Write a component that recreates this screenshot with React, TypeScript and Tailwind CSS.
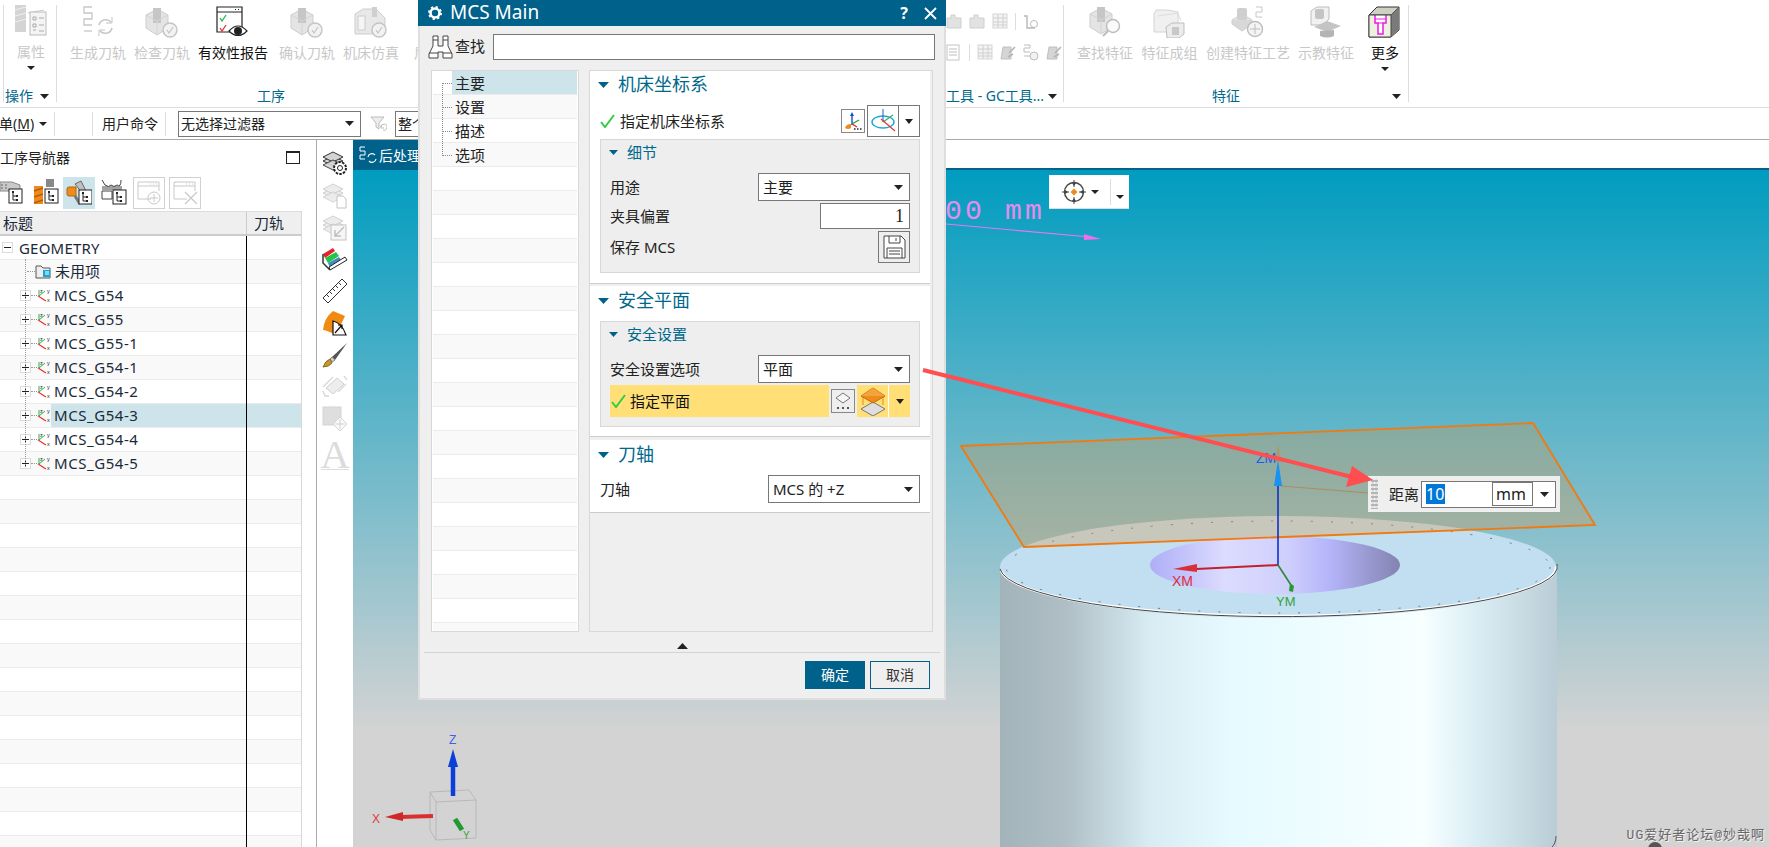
import React from "react";

const Tri = ({ w = 10, h = 6, up = false, color = "#222" }: { w?: number; h?: number; up?: boolean; color?: string }) => (
  <svg width={w} height={h} viewBox="0 0 10 6" preserveAspectRatio="none" className="shrink-0">
    <polygon points={up ? "5,0 10,6 0,6" : "0,0 10,0 5,6"} fill={color} />
  </svg>
);

const Snake = ({ x = 0, y = 0, c = "#c8c8c8" }: { x?: number; y?: number; c?: string }) => (
  <path d={`M${x + 8} ${y}H${x}V${y + 6}H${x + 8}V${y + 12}H${x}V${y + 18}H${x + 8}`} fill="none" stroke={c} strokeWidth="1.3" />
);

const TickCircle = ({ cx, cy, r = 7, c = "#c4c4c4" }: { cx: number; cy: number; r?: number; c?: string }) => (
  <g>
    <circle cx={cx} cy={cy} r={r} fill="#f2f2f2" stroke={c} strokeWidth="1.4" />
    <path d={`M${cx - 3} ${cy}l2 3l4 -6`} fill="none" stroke={c} strokeWidth="1.2" />
  </g>
);

const GrayBlock = ({ x = 0, y = 0 }: { x?: number; y?: number }) => (
  <g transform={`translate(${x} ${y})`}>
    <path d="M0 7L11 1L22 7V20L11 27L0 20Z" fill="#e4e4e4" stroke="#cdcdcd" />
    <rect x="7" y="0" width="8" height="15" fill="#c6c6c6" />
    <path d="M0 7L11 13L22 7M11 13V27" fill="none" stroke="#d4d4d4" />
  </g>
);

const I32 = ({ children }: { children: React.ReactNode }) => (
  <svg width="34" height="32" viewBox="0 0 34 32" className="shrink-0">
    {children}
  </svg>
);

const PropIcon = () => (
  <I32>
    <rect x="1" y="0" width="11" height="27" fill="#d4d4d4" />
    <path d="M1 5l11 -3M1 11l11 -3M1 17l11 -3" stroke="#eee" />
    <path d="M14 8l16 -3" stroke="#ccc" />
    <rect x="16" y="7" width="16" height="23" fill="#f4f4f4" stroke="#bbb" />
    <path d="M19 12h3v3h-3zM19 19h3v3h-3zM19 25h3M25 13h5M25 20h5M25 26h5" fill="none" stroke="#aaa" />
  </I32>
);
const GenIcon = () => (
  <I32>
    <Snake x={3} y={1} />
    <path d="M3 25h8" stroke="#c8c8c8" strokeWidth="1.3" />
    <path d="M18 19a7 7 0 0 1 12 -3M31 22a7 7 0 0 1 -12 3" fill="none" stroke="#c4c4c4" strokeWidth="1.5" />
    <path d="M31 11v6h-6M18 30v-6h6" fill="none" stroke="#c4c4c4" />
  </I32>
);
const CheckPathIcon = () => (
  <I32>
    <GrayBlock x={1} y={2} />
    <TickCircle cx={25} cy={24} />
  </I32>
);
const ReportIcon = () => (
  <I32>
    <path d="M26 26V1H1V26H14" fill="#fff" stroke="#222" strokeWidth="1.2" />
    <path d="M1 6H26" stroke="#222" />
    <path d="M19 3.5h1M22 3.5h1" stroke="#222" />
    <path d="M4 12l2 3l4 -6" fill="none" stroke="#22bb44" strokeWidth="1.3" />
    <path d="M4 22l2 3l4 -6" fill="none" stroke="#e8313a" strokeWidth="1.3" />
    <path d="M13 25q9 -10 18 0q-9 9 -18 0z" fill="#fff" stroke="#222" strokeWidth="1.2" />
    <circle cx="22" cy="25" r="4" fill="#222" />
  </I32>
);
const MachineIcon = () => (
  <I32>
    <path d="M1 8L9 3H22L31 12V28H1Z" fill="#e8e8e8" stroke="#cdcdcd" />
    <rect x="4" y="10" width="7" height="14" fill="#f5f5f5" stroke="#ccc" />
    <rect x="18" y="1" width="5" height="10" fill="#cfcfcf" />
    <TickCircle cx={25} cy={24} />
  </I32>
);
const FindIcon = () => (
  <I32>
    <GrayBlock x={2} y={1} />
    <circle cx="25" cy="20" r="6.5" fill="#fafafa" stroke="#bcbcbc" strokeWidth="1.4" />
    <path d="M20 25l-5 5" stroke="#bcbcbc" strokeWidth="2" />
  </I32>
);
const GroupIcon = () => (
  <I32>
    <path d="M1 8l2 -4h12l10 2v20H1z" fill="#f0f0f0" stroke="#d4d4d4" />
    <path d="M5 10l20 -3l3 8" fill="none" stroke="#dcdcdc" />
    <path d="M13 21l6 -4h12v11l-5 4H14z" fill="#ececec" stroke="#bdbdbd" />
    <rect x="19" y="21" width="7" height="8" fill="#c8c8c8" />
  </I32>
);
const CreateIcon = () => (
  <I32>
    <path d="M1 14L11 8L21 14L11 21Z" fill="#e4e4e4" stroke="#cfcfcf" />
    <path d="M1 14v4l10 7l10 -7v-4" fill="#d8d8d8" stroke="#cfcfcf" />
    <rect x="6" y="2" width="10" height="12" rx="2" fill="#cfcfcf" />
    <path d="M25 1h6v5h-6v5h6" fill="none" stroke="#c8c8c8" />
    <circle cx="24" cy="23" r="7.5" fill="#f4f4f4" stroke="#bdbdbd" strokeWidth="1.4" />
    <path d="M24 18v10M19 23h10" stroke="#bdbdbd" />
  </I32>
);
const TeachIcon = () => (
  <I32>
    <path d="M2 5l6 -4h12v12l-6 6H2z" fill="#f1f1f1" stroke="#bdbdbd" />
    <rect x="6" y="3" width="9" height="10" rx="2" fill="#c4c4c4" />
    <path d="M5 21l13 -6l14 5l-14 6z" fill="#c4c4c4" />
    <path d="M11 25v5q7 3 14 0v-6" fill="#b4b4b4" />
  </I32>
);
const MoreIcon = () => (
  <I32>
    <path d="M1 9L9 1H31V24L23 31H1Z" fill="#cfd0c4" stroke="#333" />
    <path d="M1 9H23V31M23 9L31 1" fill="none" stroke="#333" />
    <path d="M23 9L31 1V24L23 31Z" fill="#7a7a7a" />
    <rect x="1" y="9" width="22" height="22" fill="#eef0e0" />
    <path d="M7 9V17H10V28H15V17H18V9" fill="#fff" stroke="#f018e8" strokeWidth="1.5" />
    <path d="M7 13H18M10 17H15" stroke="#f018e8" strokeWidth="1.2" />
    <path d="M1 9H23V31H1Z" fill="none" stroke="#444" />
  </I32>
);

const Small = ({ kind }: { kind: number }) => (
  <svg width="16" height="17" viewBox="0 0 16 17" className="shrink-0">
    {kind === 0 && <path d="M1 5h4v-3h4v3h6v10h-14z" fill="#e2e2e2" stroke="#cfcfcf" />}
    {kind === 1 && (
      <g>
        <rect x="1" y="1" width="14" height="14" fill="#f3f3f3" stroke="#d6d6d6" />
        <path d="M1 5h14M1 9h14M1 12h14M6 1v14M11 1v14" stroke="#d0d0d0" />
      </g>
    )}
    {kind === 2 && (
      <g>
        <path d="M1 3h3v12h8" fill="none" stroke="#b8b8b8" strokeWidth="1.4" />
        <circle cx="11" cy="11" r="3.5" fill="none" stroke="#bcbcbc" />
      </g>
    )}
    {kind === 3 && (
      <g>
        <rect x="1" y="1" width="12" height="15" fill="#fff" stroke="#c4c4c4" />
        <path d="M3 5h8M3 8h8M3 11h8" stroke="#bdbdbd" />
      </g>
    )}
    {kind === 4 && (
      <g>
        <path d="M1 15l2 -12h8v12z" fill="#d5d5d5" stroke="#c0c0c0" />
        <path d="M9 9l6 -6M8 13l5 -3" stroke="#b5b5b5" strokeWidth="1.6" />
      </g>
    )}
    {kind === 5 && (
      <g>
        <path d="M1 1h6v3h-6v4h6M1 12h6" fill="none" stroke="#bdbdbd" />
        <circle cx="11" cy="12" r="4" fill="#f1f1f1" stroke="#bdbdbd" />
      </g>
    )}
  </svg>
);

const RibbonBtn = ({
  w,
  label,
  dark,
  caret,
  children,
}: {
  w: number;
  label: string;
  dark?: boolean;
  caret?: boolean;
  children: React.ReactNode;
}) => (
  <div className={`flex flex-col items-center shrink-0 ${w === 64 ? "w-[64px]" : w === 65 ? "w-[65px]" : w === 78 ? "w-[78px]" : w === 92 ? "w-[92px]" : w === 46 ? "w-[46px]" : "w-[54px]"}`}>
    <div className="h-[32px] flex justify-center">{children}</div>
    <div className={`mt-[5px] h-[20px] leading-[20px] text-[14px] whitespace-nowrap ${dark ? "text-[#111]" : "text-[#c8c8c8]"}`}>{label}</div>
    {caret && (
      <div className="mt-[4px]">
        <Tri w={8} h={4} />
      </div>
    )}
  </div>
);

const GroupLabel = ({ text, className, tri }: { text: string; className: string; tri?: string }) => (
  <div className={`flex items-center h-[20px] -mb-[4px] text-[14px] leading-[20px] text-[#00688c] whitespace-nowrap shrink-0 ${className}`}>
    <span>{text}</span>
    {tri && (
      <div className={tri}>
        <Tri w={9} h={5} />
      </div>
    )}
  </div>
);

const Ribbon = () => (
  <div className="flex h-[107px] pl-[3px] pt-[5px] shrink-0 overflow-hidden">
    <div className="w-[54px] h-[97px] border-x border-[#dddddd] flex flex-col justify-between shrink-0">
      <RibbonBtn w={54} label="属性" caret>
        <PropIcon />
      </RibbonBtn>
      <GroupLabel text="操作" className="pl-[1px]" tri="ml-[7px]" />
    </div>
    <div className="w-[428px] h-[97px] flex flex-col justify-between shrink-0">
      <div className="flex pl-[9px] pt-[1px]">
        <RibbonBtn w={64} label="生成刀轨">
          <GenIcon />
        </RibbonBtn>
        <RibbonBtn w={64} label="检查刀轨">
          <CheckPathIcon />
        </RibbonBtn>
        <RibbonBtn w={78} label="有效性报告" dark>
          <ReportIcon />
        </RibbonBtn>
        <div className="w-[3px]" />
        <RibbonBtn w={64} label="确认刀轨">
          <CheckPathIcon />
        </RibbonBtn>
        <RibbonBtn w={64} label="机床仿真">
          <MachineIcon />
        </RibbonBtn>
        <RibbonBtn w={64} label="后处理">
          <GenIcon />
        </RibbonBtn>
      </div>
      <GroupLabel text="工序" className="pl-[200px]" />
    </div>
    <div className="w-[579px] h-[97px] border-r border-[#dddddd] flex flex-col shrink-0">
      <div className="flex items-center gap-[7px] pl-[461px] mt-[8px] h-[17px]">
        <Small kind={0} />
        <Small kind={0} />
        <Small kind={1} />
        <div className="w-[1px] h-[17px] bg-[#dddddd]" />
        <Small kind={2} />
      </div>
      <div className="flex items-center gap-[7px] pl-[461px] mt-[14px] h-[17px]">
        <Small kind={3} />
        <div className="w-[1px] h-[17px] bg-[#dddddd]" />
        <Small kind={1} />
        <Small kind={4} />
        <Small kind={5} />
        <Small kind={4} />
      </div>
      <GroupLabel text="工具 - GC工具..." className="pl-[461px] mt-auto" tri="ml-[4px]" />
    </div>
    <div className="w-[345px] h-[97px] border-r border-[#dddddd] flex flex-col justify-between shrink-0">
      <div className="flex pl-[9px] pt-[1px]">
        <RibbonBtn w={64} label="查找特征">
          <FindIcon />
        </RibbonBtn>
        <RibbonBtn w={65} label="特征成组">
          <GroupIcon />
        </RibbonBtn>
        <RibbonBtn w={92} label="创建特征工艺">
          <CreateIcon />
        </RibbonBtn>
        <RibbonBtn w={64} label="示教特征">
          <TeachIcon />
        </RibbonBtn>
        <div className="w-[5px]" />
        <RibbonBtn w={46} label="更多" dark caret>
          <MoreIcon />
        </RibbonBtn>
      </div>
      <GroupLabel text="特征" className="pl-[148px]" tri="ml-[152px]" />
    </div>
  </div>
);

const CommandBar = () => (
  <div className="flex items-center h-[33px] border-y border-t-[#dddddd] border-b-[#aaaaaa] shrink-0 text-[14px] text-[#222] overflow-hidden">
    <span className="w-[40px] -ml-[1px] whitespace-nowrap">
      单(<span className="underline">M</span>)
    </span>
    <Tri w={8} h={4} />
    <div className="w-[1px] h-[24px] bg-[#dddddd] ml-[7px]" />
    <div className="w-[1px] h-[24px] bg-[#dddddd] ml-[37px]" />
    <span className="ml-[9px] whitespace-nowrap">用户命令</span>
    <div className="w-[1px] h-[24px] bg-[#dddddd] ml-[7px]" />
    <div className="ml-[12px] w-[183px] h-[26px] border border-[#777] flex items-center justify-between pl-[2px] pr-[6px] shrink-0">
      <span>无选择过滤器</span>
      <Tri w={9} h={5} />
    </div>
    <svg width="17" height="16" viewBox="0 0 17 16" className="ml-[9px] shrink-0">
      <path d="M1 1h13l-5 6v6l-3 -2v-4z" fill="#eee" stroke="#bcbcbc" />
      <path d="M11 11a3 3 0 1 1 2 3M11 9v3h3" fill="none" stroke="#bcbcbc" />
    </svg>
    <div className="ml-[8px] w-[60px] h-[26px] border border-[#777] pl-[2px] leading-[24px] shrink-0">整个</div>
  </div>
);

const TreeBadge = ({ x, y }: { x: number; y: number }) => (
  <g transform={`translate(${x} ${y})`}>
    <rect x="0" y="0" width="13" height="14" fill="#fff" stroke="#222" />
    <path d="M4 3v8M4 7h3M4 11h3" stroke="#222" fill="none" />
    <rect x="3" y="2" width="2" height="2" fill="#222" />
    <rect x="7" y="6" width="2" height="2" fill="#222" />
    <rect x="7" y="10" width="2" height="2" fill="#222" />
  </g>
);

const NavBlockIcon = () => (
  <svg width="24" height="26" viewBox="0 0 24 26" className="shrink-0">
    <path d="M0 3h12l8 3v6H0z" fill="#c9c9c9" stroke="#888" />
    <path d="M1 6h2M5 6h2M1 9h2M5 9h2" stroke="#666" />
    <TreeBadge x={9} y={10} />
  </svg>
);
const NavToolIcon = () => (
  <svg width="26" height="26" viewBox="0 0 26 26" className="shrink-0">
    <rect x="13" y="0" width="8" height="8" fill="#888" />
    <rect x="1" y="7" width="9" height="18" fill="#ef8a1d" />
    <path d="M1 12l9 -3M1 18l9 -3M1 24l9 -3" stroke="#b55e0a" strokeWidth="1.5" />
    <TreeBadge x={12} y={10} />
  </svg>
);
const NavMachIcon = () => (
  <svg width="26" height="26" viewBox="0 0 26 26" className="shrink-0">
    <path d="M9 4l6 -3l5 10l-3 3z" fill="#bfbfbf" stroke="#666" />
    <path d="M1 9q0 -2 2 -2h7v9H3q-2 0 -2 -2z" fill="#ee8a1e" stroke="#b96400" />
    <path d="M9 16l5 8" stroke="#777" strokeWidth="3" />
    <TreeBadge x={13} y={10} />
  </svg>
);
const NavCrownIcon = () => (
  <svg width="26" height="26" viewBox="0 0 26 26" className="shrink-0">
    <path d="M1 1l3 5q4 3 6 0q3 3 6 0q4 3 4 -5" fill="none" stroke="#444" />
    <path d="M1 8h20M1 10h20" stroke="#444" />
    <path d="M1 12h10v8H1z" fill="#fff" stroke="#444" />
    <TreeBadge x={12} y={11} />
  </svg>
);
const NavDisabled = ({ plus }: { plus: boolean }) => (
  <svg width="32" height="32" viewBox="0 0 32 32" className="shrink-0">
    <rect x="0.5" y="0.5" width="31" height="31" fill="#fff" stroke="#d0d0d0" />
    <path d="M18 22H5V5H26V14M5 9H26" fill="none" stroke="#c8c8c8" />
    <path d="M17 7h1M20 7h1M23 7h1" stroke="#c8c8c8" />
    {plus ? (
      <g>
        <circle cx="21" cy="21" r="6" fill="none" stroke="#c8c8c8" />
        <path d="M21 17v8M17 21h8" stroke="#c8c8c8" />
      </g>
    ) : (
      <path d="M16 15l12 12M28 15l-12 12" stroke="#c8c8c8" strokeWidth="1.2" />
    )}
  </svg>
);

const McsIcon = () => (
  <svg width="14" height="15" viewBox="0 0 14 15" className="shrink-0">
    <path d="M2 2V8" stroke="#2bb050" />
    <path d="M2 8L8 3" stroke="#2bb050" />
    <path d="M1 8L9 13" stroke="#e8313a" strokeWidth="1.2" />
    <text x="3" y="4.5" fontSize="5.5" fill="#222" fontFamily="Liberation Sans">z</text>
    <text x="10" y="5" fontSize="5.5" fill="#222" fontFamily="Liberation Sans">y</text>
    <text x="10" y="14" fontSize="5.5" fill="#222" fontFamily="Liberation Sans">x</text>
  </svg>
);
const FolderIcon = () => (
  <svg width="16" height="14" viewBox="0 0 16 14" className="shrink-0">
    <path d="M1 1h5l2 2h7v10H1z" fill="#eee" stroke="#555" />
    <rect x="8" y="5" width="7" height="7" fill="#15a8d8" />
    <path d="M10 7h4M10 9h4" stroke="#fff" />
  </svg>
);

const mcsNames = ["MCS_G54", "MCS_G55", "MCS_G55-1", "MCS_G54-1", "MCS_G54-2", "MCS_G54-3", "MCS_G54-4", "MCS_G54-5"];

const NavRow = ({ index, selected, children }: { index: number; selected?: boolean; children?: React.ReactNode }) => (
  <div className={`flex h-[24px] border-b border-[#ebebeb] shrink-0 ${index % 2 ? "bg-[#f9f9f9]" : "bg-white"}`}>
    <div className="w-[246px] h-full flex items-center shrink-0">{children}</div>
    <div className={`flex-1 ${selected ? "bg-[#cce4ea]" : ""}`} />
  </div>
);

const Navigator = () => (
  <div className="w-[317px] border-r border-[#aaaaaa] flex flex-col shrink-0 overflow-hidden">
    <div className="flex items-center justify-between h-[35px] pr-[16px] shrink-0">
      <span className="text-[14px] text-[#222] -mt-[1px]">工序导航器</span>
      <div className="w-[14px] h-[13px] border border-[#222] border-t-2" />
    </div>
    <div className="flex items-center h-[36px] shrink-0">
      <div className="w-[33px] flex -mt-[3px]">
        <NavBlockIcon />
      </div>
      <div className="w-[30px] flex -mt-[3px]">
        <NavToolIcon />
      </div>
      <div className="w-[32px] h-[32px] bg-[#cce4ea] flex items-center justify-center">
        <NavMachIcon />
      </div>
      <div className="w-[38px] pl-[6px] flex -mt-[3px]">
        <NavCrownIcon />
      </div>
      <div className="mr-[4px]">
        <NavDisabled plus />
      </div>
      <NavDisabled plus={false} />
    </div>
    <div className="w-[302px] border-r border-[#d8d8d8] flex-1 flex flex-col overflow-hidden relative text-[15px] text-[#1b2a38]">
      <div className="flex h-[25px] bg-[#efefef] border-t border-[#dedede] border-b-2 border-b-[#cccccc] shrink-0">
        <div className="w-[246px] pl-[3px] leading-[22px]">标题</div>
        <div className="flex-1 pl-[7px] border-l border-[#cccccc] leading-[22px]">刀轨</div>
      </div>
      <NavRow index={0}>
        <div className="ml-[2px] w-[11px] h-[11px] border border-[#dddddd] flex items-center justify-center">
          <div className="w-[7px] h-[1px] bg-[#222]" />
        </div>
        <span className="ml-[6px] tracking-[0.2px] mt-[1px]">GEOMETRY</span>
      </NavRow>
      <NavRow index={1}>
        <div className="ml-[27px] w-[8px] border-t border-dotted border-[#999]" />
        <FolderIcon />
        <span className="ml-[4px]">未用项</span>
      </NavRow>
      {mcsNames.map((name, i) => (
        <NavRow key={name} index={i + 2} selected={name === "MCS_G54-3"}>
          <div className="ml-[20px] w-[11px] h-[11px] border border-[#dddddd] bg-white relative flex items-center justify-center shrink-0">
            <div className="w-[7px] h-[1px] bg-[#222]" />
            <div className="absolute w-[1px] h-[7px] bg-[#222]" />
          </div>
          <div className="w-[6px] border-t border-dotted border-[#999]" />
          <McsIcon />
          <div className={`flex-1 h-full flex items-center pl-[3px] tracking-[0.55px] ${name === "MCS_G54-3" ? "bg-[#cce4ea]" : ""}`}>{name}</div>
        </NavRow>
      ))}
      {Array.from({ length: 16 }).map((_, i) => (
        <NavRow key={i} index={i + 10} />
      ))}
      {/* dotted spine of the tree and the column rule */}
      <div className="absolute left-[25px] top-[48px] h-[208px] border-l border-dotted border-[#999]" />
      <div className="absolute left-[246px] top-[25px] bottom-0 w-[1px] bg-black" />
    </div>
  </div>
);

const T26 = ({ children }: { children: React.ReactNode }) => (
  <div className="h-[32px] flex justify-center shrink-0">
    <svg width="26" height="28" viewBox="0 0 26 28">
      {children}
    </svg>
  </div>
);

const Stack = ({ c, fill }: { c: string; fill: string }) => (
  <g fill={fill} stroke={c}>
    <path d="M1 11L11 6L21 11L11 16Z" />
    <path d="M1 7L11 2L21 7L11 12Z" />
    <path d="M1 15L11 10L21 15L11 20Z" opacity="0.9" />
  </g>
);

const SideBar = () => (
  <div className="w-[36px] flex flex-col pt-[10px] shrink-0">
    <T26>
      <Stack c="#333" fill="#d4d4d4" />
      <circle cx="18" cy="18" r="6" fill="#fff" stroke="#222" strokeWidth="2" strokeDasharray="2.5 1.2" />
      <circle cx="18" cy="18" r="2.5" fill="#fff" stroke="#222" />
    </T26>
    <T26>
      <Stack c="#cfcfcf" fill="#ececec" />
      <path d="M15 14h6l3 3v9h-9z" fill="#fff" stroke="#c4c4c4" />
    </T26>
    <T26>
      <Stack c="#cfcfcf" fill="#ececec" />
      <rect x="9" y="11" width="15" height="15" fill="#f6f6f6" stroke="#c4c4c4" />
      <path d="M22 13L13 22M13 16v6h6" fill="none" stroke="#bdbdbd" strokeWidth="1.4" />
    </T26>
    <T26>
      <path d="M1 8L11 2L13 5L3 12Z" fill="#e8212c" />
      <path d="M3 12L14 6L17 10L6 17Z" fill="#26c24a" />
      <path d="M6 17L17 11L20 15L8 22Z" fill="#3f8fc0" />
      <path d="M1 8V17L8 24" fill="none" stroke="#333" strokeWidth="1.5" />
      <path d="M8 24L25 14L23 11L7 21Z" fill="#fff" stroke="#222" />
    </T26>
    <T26>
      <path d="M1 20L20 1L25 6L6 25Z" fill="#fff" stroke="#333" />
      <path d="M5 17l2 2M8 14l2 2M11 11l2 2M14 8l2 2M17 5l2 2" stroke="#333" />
    </T26>
    <T26>
      <path d="M11 1L23 6L14 25Q4 20 1 20Q2 8 11 1Z" fill="#f08a12" />
      <path d="M11 11Q20 13 24 25H11Z" fill="#fff" stroke="#111" strokeWidth="1.2" />
      <path d="M13 23L20 15M16 15h4v4" fill="none" stroke="#111" strokeWidth="1.2" />
    </T26>
    <T26>
      <path d="M10 15L25 1L13 18Z" fill="#555" />
      <path d="M10 15l3 3l-3 2l-2 -3z" fill="#ccc" stroke="#888" />
      <path d="M8 17q-5 2 -7 8q6 0 9 -4z" fill="#c49a2c" stroke="#8a6a1a" />
    </T26>
    <T26>
      <path d="M4 14L15 4L22 10L11 20Z" fill="#ededed" stroke="#d0d0d0" />
      <path d="M1 17l2 5h4M1 13l10 -10M22 2l3 4M24 10l-8 8" fill="none" stroke="#d8d8d8" strokeWidth="1.4" />
    </T26>
    <T26>
      <rect x="1" y="1" width="18" height="18" fill="#dedede" stroke="#d4d4d4" />
      <path d="M18 11l7 7l-7 7l-7 -7z" fill="#fafafa" stroke="#d4d4d4" />
      <path d="M18 13v10M13 18h10" stroke="#cfcfcf" />
    </T26>
    <div className="h-[31px] text-center text-[41px] leading-[32px] text-[#dcdcdc] font-['Liberation_Serif',serif]">A</div>
    <div className="mx-[4px] h-[1px] bg-[#dddddd]" />
  </div>
);

const Scene = () => (
  <svg viewBox="353 170 1416 677" className="absolute inset-0 w-full h-full">
    <defs>
      <linearGradient id="cyl" x1="0" x2="1" y1="0" y2="0">
        <stop offset="0" stopColor="#a3b3ba" />
        <stop offset="0.12" stopColor="#b0bfc6" />
        <stop offset="0.27" stopColor="#d8ecf3" />
        <stop offset="0.42" stopColor="#e6faff" />
        <stop offset="0.76" stopColor="#f7ffff" />
        <stop offset="0.85" stopColor="#dceef5" />
        <stop offset="1" stopColor="#bacdd6" />
      </linearGradient>
      <linearGradient id="hole" x1="0" x2="1" y1="0" y2="0">
        <stop offset="0" stopColor="#aeaef8" />
        <stop offset="0.3" stopColor="#dcdcff" />
        <stop offset="0.55" stopColor="#cfcffd" />
        <stop offset="0.72" stopColor="#b4b4fa" />
        <stop offset="1" stopColor="#8383b0" />
      </linearGradient>
    </defs>
    {/* dimension leader */}
    <path d="M946 224L1090 237" stroke="#e677ee" strokeWidth="1.2" />
    <polygon points="1084,234 1101,239 1084,240" fill="#ee70f0" />
    {/* cylinder */}
    <path d="M1000 568V860H1557V564Z" fill="url(#cyl)" />
    <path d="M1556 836Q1556 844 1551 848" fill="none" stroke="#555" />
    <ellipse cx="1278" cy="567" rx="278" ry="51" fill="#c1dff0" />
    <path d="M1001 571A278 49 0 0 0 1556 566" fill="none" stroke="#ffffff" strokeWidth="2.5" />
    <path d="M1000 569A278 50 0 0 0 1557 564" fill="none" stroke="#444444" strokeWidth="1" />
    <ellipse cx="1278" cy="567" rx="272" ry="46" fill="none" stroke="#777" strokeWidth="1" strokeDasharray="2 18" />
    <ellipse cx="1275" cy="565" rx="125" ry="29" fill="url(#hole)" />
    {/* plane */}
    <polygon points="961,446 1533,423 1595,525 1024,547" fill="#d7964e" fillOpacity="0.32" stroke="#f07a10" strokeWidth="1.8" />
    {/* work coordinate system */}
    <path d="M1281 486L1369 493" stroke="#b08a60" strokeWidth="1" />
    <path d="M1278 565V486" stroke="#1030c8" strokeWidth="1.6" />
    <polygon points="1278,445 1274,462 1282,462" fill="#a89a70" />
    <polygon points="1278,460 1274,486 1282,486" fill="#1a92f0" />
    <path d="M1278 565L1196 569" stroke="#c02030" strokeWidth="2" />
    <polygon points="1173,569 1197,564 1197,572" fill="#d83038" />
    <path d="M1278 565L1291 585" stroke="#2a8a30" strokeWidth="1.6" />
    <path d="M1290 583l4 3l-1 6l-4 -1z" fill="#2a9a30" />
    <text x="1256" y="463" fontSize="14" fill="#1a5cf0" fontFamily="Liberation Sans">ZM</text>
    <text x="1172" y="586" fontSize="14" fill="#d83040" fontFamily="Liberation Sans">XM</text>
    <text x="1276" y="606" fontSize="13" fill="#3aa040" fontFamily="Liberation Sans">YM</text>
    {/* view triad */}
    <path d="M430 792L469 790L476 800L436 802ZM436 802V840L476 838V800M430 792V830L436 840" fill="none" stroke="#b8b8b8" />
    <path d="M453 796V763" stroke="#0a3fd8" strokeWidth="4.5" />
    <polygon points="453,749 448,767 458,767" fill="#0a3fd8" />
    <path d="M433 816L400 817" stroke="#d83030" strokeWidth="4" />
    <polygon points="385,817 403,812 403,821" fill="#d02828" />
    <path d="M455 819L462 830" stroke="#1f9a30" strokeWidth="5" />
    <text x="449" y="744" fontSize="12" fill="#4060e8" fontFamily="Liberation Sans">Z</text>
    <text x="372" y="823" fontSize="12" fill="#d84040" fontFamily="Liberation Sans">X</text>
    <text x="463" y="839" fontSize="10" fill="#40a040" fontFamily="Liberation Sans">Y</text>
    <circle cx="1655" cy="849" r="7" fill="#555" />
  </svg>
);

const Viewport = () => (
  <div className="flex-1 flex flex-col min-w-0">
    <div className="h-[30px] border-b-2 border-[#00618a] shrink-0 flex">
      <div className="w-[200px] h-[30px] bg-[#00618a] flex items-center pl-[6px] text-[14px] text-white">
        <svg width="19" height="18" viewBox="0 0 19 18" className="shrink-0">
          <path d="M6 1H1V5H6V9H1V13H6" fill="none" stroke="#fff" />
          <path d="M9 11a4 4 0 0 1 7 -2M17 13a4 4 0 0 1 -7 2" fill="none" stroke="#fff" strokeWidth="1.2" />
        </svg>
        <span className="ml-[1px]">后处理</span>
      </div>
    </div>
    <div className="flex-1 relative overflow-hidden bg-[linear-gradient(180deg,#009cc0_0px,#d3d3d3_560px)]">
      <Scene />
      <span className="absolute left-[592px] top-[24px] font-['Liberation_Mono',monospace] text-[28px] leading-[36px] tracking-[3.2px] text-[#e48cec] whitespace-pre">00 mm</span>
      <div className="absolute left-[696px] top-[5px] w-[80px] h-[34px] bg-white border-b border-[#dddddd] flex items-center">
        <svg width="24" height="24" viewBox="0 0 24 24" className="ml-[13px] shrink-0">
          <circle cx="12" cy="12" r="9.5" fill="none" stroke="#444" strokeWidth="1.4" />
          <path d="M12 0v7M12 17v7M0 12h7M17 12h7" stroke="#444" />
          <path d="M10 3h4l-2 3zM10 21h4l-2 -3zM3 10v4l3 -2zM21 10v4l-3 -2z" fill="#444" />
          <path d="M12 8.5l3.5 3.5l-3.5 3.5l-3.5 -3.5z" fill="#ef8a1d" />
        </svg>
        <div className="ml-[5px]">
          <Tri w={8} h={4} />
        </div>
        <div className="ml-[11px] w-[1px] h-[26px] bg-[#dddddd]" />
        <div className="ml-[5px] mt-[11px]">
          <Tri w={8} h={4} />
        </div>
      </div>
      <div className="absolute left-[1015px] top-[306px] w-[192px] h-[36px] bg-[#efefef] flex items-center text-[15px] text-[#222]">
        <div className="ml-[3px] w-[7px] h-[30px] bg-[radial-gradient(circle,#b5b5b5_1.5px,transparent_1.6px)] bg-[length:3.5px_4px]" />
        <span className="ml-[11px]">距离</span>
        <div className="ml-[2px] w-[135px] h-[27px] border border-[#777] bg-white flex items-center">
          <span className="ml-[4px] h-[20px] w-[19px] bg-[#0078d7] text-white text-[16px] leading-[20px]">10</span>
          <div className="ml-[47px] w-[41px] h-[24px] border border-[#777] pl-[3px] text-[16px] leading-[22px]">mm</div>
          <div className="ml-[7px]">
            <Tri w={9} h={5} />
          </div>
        </div>
      </div>
      <span className="absolute right-[4px] bottom-[4px] text-[13px] leading-[15px] tracking-[1px] text-[#666] whitespace-nowrap font-['Liberation_Mono','Noto_Sans_CJK_SC',monospace] [text-shadow:1px_1px_0_#f4f4f4]">UG爱好者论坛@妙哉啊</span>
    </div>
  </div>
);

const Select = ({ value, className }: { value: string; className: string }) => (
  <div className={`h-[28px] border border-[#777] bg-white flex items-center justify-between pl-[4px] pr-[6px] shrink-0 ${className}`}>
    <span>{value}</span>
    <Tri w={9} h={5} />
  </div>
);

const Check = () => (
  <svg width="15" height="14" viewBox="0 0 15 14" className="shrink-0">
    <path d="M1 8l4 5l9 -12" fill="none" stroke="#33cc44" strokeWidth="2" />
  </svg>
);

const SectionHead = ({ text }: { text: string }) => (
  <div className="flex items-center h-[29px] pl-[8px] shrink-0 text-[18px] text-[#00688c]">
    <Tri w={11} h={6} color="#00618a" />
    <span className="ml-[9px]">{text}</span>
  </div>
);

const GroupHead = ({ text }: { text: string }) => (
  <div className="flex items-center h-[33px] pb-[8px] pl-[8px] shrink-0 text-[15px] text-[#00688c]">
    <Tri w={9} h={5} color="#00618a" />
    <span className="ml-[9px]">{text}</span>
  </div>
);

const listLabels = ["主要", "设置", "描述", "选项"];

const Dialog = () => (
  <div className="absolute left-[418px] top-0 w-[528px] h-[700px] bg-[#efefef] border-x-2 border-b-2 border-[#dedede] flex flex-col text-[15px] text-[#222]">
    <div className="h-[26px] -mx-[2px] bg-[#00618a] flex items-center text-white shrink-0">
      <svg width="16" height="16" viewBox="0 0 16 16" className="ml-[9px] shrink-0">
        <circle cx="8" cy="8" r="4.5" fill="none" stroke="#fff" strokeWidth="2.6" />
        <circle cx="8" cy="8" r="6" fill="none" stroke="#fff" strokeWidth="2" strokeDasharray="2.2 2.5" />
      </svg>
      <span className="ml-[7px] text-[19px] leading-[24px] pb-[2px]">MCS Main</span>
      <span className="ml-auto font-bold text-[16px]">?</span>
      <svg width="13" height="13" viewBox="0 0 13 13" className="ml-[16px] mr-[9px] shrink-0">
        <path d="M1 1L12 12M12 1L1 12" stroke="#fff" strokeWidth="1.8" />
      </svg>
    </div>
    <div className="flex items-center h-[44px] pl-[8px] pb-[3px] shrink-0">
      <svg width="25" height="24" viewBox="0 0 25 24" className="shrink-0">
        <path d="M5 1h5v10h5V1h5v10l4 8v4h-9v-6h-5v6H1v-4l4 -8z" fill="#fff" stroke="#444" />
        <path d="M1 18h9M15 18h9M5 5h5M15 5h5" stroke="#444" fill="none" />
      </svg>
      <span className="ml-[2px]">查找</span>
      <div className="ml-[8px] w-[442px] h-[26px] border border-[#777] bg-white" />
    </div>
    <div className="flex h-[562px] pl-[11px] shrink-0">
      <div className="w-[148px] border border-[#d8d8d8] bg-white px-[1px] overflow-hidden relative shrink-0">
        {Array.from({ length: 24 }).map((_, i) => (
          <div key={i} className={`flex h-[24px] border-b border-[#ebebeb] pl-[19px] ${i % 2 ? "bg-[#f9f9f9]" : "bg-white"}`}>
            {listLabels[i] && (
              <div className={`flex-1 h-full pl-[3px] leading-[24px] ${i === 0 ? "bg-[#cce4ea]" : ""}`}>{listLabels[i]}</div>
            )}
          </div>
        ))}
        <div className="absolute left-[10px] top-[12px] h-[73px] w-[10px] border-l border-dotted border-[#888]" />
        {[0, 1, 2, 3].map((i) => (
          <div key={i} className={`absolute left-[10px] w-[10px] border-t border-dotted border-[#888] ${i === 0 ? "top-[12px]" : i === 1 ? "top-[36px]" : i === 2 ? "top-[60px]" : "top-[84px]"}`} />
        ))}
      </div>
      <div className="ml-[10px] w-[344px] border border-[#d8d8d8] bg-[#efefef] pr-[2px] flex flex-col overflow-hidden shrink-0">
        <div className="h-[213px] mb-[2px] bg-white border-b border-[#cccccc] flex flex-col shrink-0 px-[10px]">
          <div className="-mx-[10px] -mt-[1px]">
            <SectionHead text="机床坐标系" />
          </div>
          <div className="flex items-center h-[32px] mt-[6px] shrink-0">
            <Check />
            <span className="ml-[5px]">指定机床坐标系</span>
            <div className="ml-auto w-[24px] h-[24px] border border-[#888] flex items-center justify-center">
              <svg width="20" height="20" viewBox="0 0 20 20">
                <path d="M9 14V3" stroke="#1050d0" strokeWidth="1.4" />
                <path d="M9 1l-2 4h4z" fill="#1050d0" />
                <path d="M9 13l7 -4" stroke="#2aa040" strokeWidth="1.4" />
                <path d="M9 13l5 3" stroke="#e02030" strokeWidth="1.4" />
                <path d="M8 13q-5 0 -6 4q3 2 6 0" fill="#ee8a1e" />
                <path d="M11 18h1.5M14 18h1.5M17 18h1.5" stroke="#222" strokeWidth="1.5" />
              </svg>
            </div>
            <div className="ml-[2px] w-[53px] h-[32px] border border-[#777] flex items-center shrink-0">
              <svg width="30" height="30" viewBox="0 0 30 30" className="shrink-0">
                <ellipse cx="15" cy="16" rx="11" ry="6" fill="none" stroke="#18a8d0" strokeWidth="1.4" />
                <path d="M15 3V16" stroke="#2060c0" />
                <path d="M15 16L25 9" stroke="#30b050" strokeWidth="1.2" />
                <path d="M13 13L27 25" stroke="#e83040" strokeWidth="1.2" />
              </svg>
              <div className="w-[1px] h-full bg-[#777]" />
              <div className="flex-1 flex justify-center">
                <Tri w={8} h={5} />
              </div>
            </div>
          </div>
          <div className="mt-[2px] h-[134px] border border-[#d8d8d8] bg-[#eeeeee] pl-[0px] pr-[9px] flex flex-col shrink-0">
            <GroupHead text="细节" />
            <div className="flex items-center justify-between pl-[9px] shrink-0">
              <span>用途</span>
              <Select value="主要" className="w-[152px]" />
            </div>
            <div className="flex items-center justify-between pl-[9px] mt-[2px] shrink-0">
              <span>夹具偏置</span>
              <div className="w-[90px] h-[26px] border border-[#777] bg-white text-right pr-[5px] text-[18px] leading-[24px] font-['Liberation_Serif',serif]">1</div>
            </div>
            <div className="flex items-center justify-between pl-[9px] mt-[2px] shrink-0">
              <span>保存 MCS</span>
              <div className="w-[32px] h-[32px] border border-[#777] flex items-center justify-center">
                <svg width="23" height="24" viewBox="0 0 23 24">
                  <path d="M1 1H18L22 5V23H1Z" fill="#fff" stroke="#444" />
                  <path d="M6 1V8H17V1M13 3V6M4 23V13H19V23M6 16H17M6 19H17" fill="none" stroke="#444" />
                </svg>
              </div>
            </div>
          </div>
        </div>
        <div className="h-[151px] mb-[3px] bg-white border-b border-[#cccccc] flex flex-col shrink-0 px-[10px]">
          <div className="-mx-[10px]">
            <SectionHead text="安全平面" />
          </div>
          <div className="mt-[6px] h-[106px] border border-[#d8d8d8] bg-[#eeeeee] pr-[9px] flex flex-col shrink-0">
            <GroupHead text="安全设置" />
            <div className="flex items-center justify-between pl-[9px] shrink-0">
              <span>安全设置选项</span>
              <Select value="平面" className="w-[152px]" />
            </div>
            <div className="flex items-center mt-[2px] ml-[9px] h-[32px] shrink-0">
              <div className="w-[219px] h-full bg-[#ffdf76] flex items-center pl-[1px]">
                <Check />
                <span className="ml-[4px] text-[#111]">指定平面</span>
              </div>
              <div className="ml-[2px] w-[24px] h-[24px] border border-[#888] flex items-center justify-center shrink-0">
                <svg width="20" height="20" viewBox="0 0 20 20">
                  <path d="M10 2l7 5l-7 5l-7 -5z" fill="#f6f6f6" stroke="#777" />
                  <path d="M4 17h2M9 17h2M14 17h2" stroke="#222" strokeWidth="1.5" />
                </svg>
              </div>
              <div className="ml-[2px] w-[53px] h-full bg-[#ffdf76] flex items-center shrink-0">
                <svg width="31" height="30" viewBox="0 0 31 30" className="shrink-0">
                  <path d="M16 16l12 7l-12 7l-12 -7z" fill="#dedede" stroke="#777" />
                  <path d="M6 11v8M26 11v8" stroke="#e08a20" />
                  <path d="M16 2l12 8l-12 7l-12 -7z" fill="#ee8a1e" stroke="#c46a08" />
                  <path d="M16 2l12 8h-24z" fill="#f5a23a" />
                </svg>
                <div className="w-[1px] h-full bg-white" />
                <div className="flex-1 flex justify-center">
                  <Tri w={8} h={5} />
                </div>
              </div>
            </div>
          </div>
        </div>
        <div className="h-[73px] bg-white border-b border-[#cccccc] flex flex-col shrink-0">
          <SectionHead text="刀轴" />
          <div className="flex items-center justify-between mt-[6px] pl-[10px] pr-[10px] shrink-0">
            <span>刀轴</span>
            <Select value="MCS 的 +Z" className="w-[152px]" />
          </div>
        </div>
      </div>
    </div>
    <div className="h-[20px] flex items-end justify-center pb-[3px] shrink-0">
      <Tri w={11} h={6} up />
    </div>
    <div className="mx-[4px] h-[1px] bg-[#d4d4d4] shrink-0" />
    <div className="flex justify-end gap-[5px] pt-[8px] pr-[14px] shrink-0">
      <div className="w-[60px] h-[28px] bg-[#00618a] text-white text-center text-[14px] leading-[28px]">确定</div>
      <div className="w-[60px] h-[28px] border border-[#00618a] text-[#333] text-center text-[14px] leading-[26px]">取消</div>
    </div>
  </div>
);

const App = () => {
  return (
    <div className="relative w-[1769px] h-[847px] overflow-hidden bg-white flex flex-col font-['Noto_Sans','Noto_Sans_CJK_SC',sans-serif]">
      <Ribbon />
      <CommandBar />
      <div className="flex flex-1 min-h-0">
        <Navigator />
        <SideBar />
        <Viewport />
      </div>
      <Dialog />
      {/* annotation arrow drawn on top of the screenshot */}
      <svg viewBox="0 0 1769 847" className="absolute inset-0 w-full h-full pointer-events-none">
        <path d="M923 370L1352 477" stroke="#ff4d50" strokeWidth="4" />
        <polygon points="1373,480 1352,466 1346,487" fill="#ff4d50" />
      </svg>
    </div>
  );
};

export default App;
